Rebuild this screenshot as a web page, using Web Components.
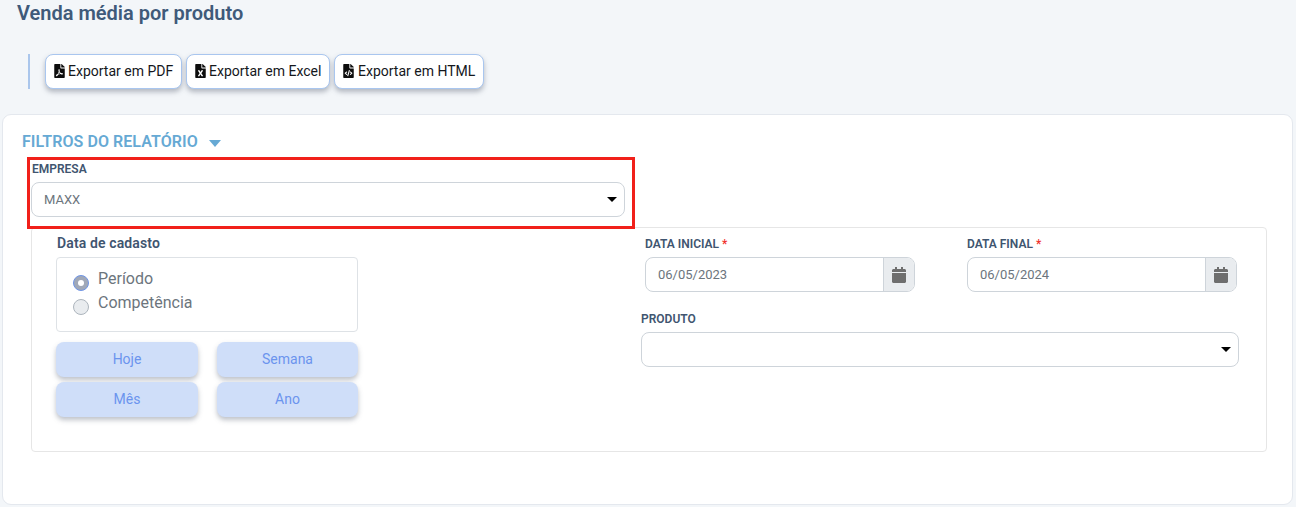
<!DOCTYPE html>
<html lang="pt-BR">
<head>
<meta charset="utf-8">
<title>Venda média por produto</title>
<style>
  html, body { margin: 0; height: 507px; overflow: hidden; }
  body { background: #f3f6f9; font-family: Roboto, "Liberation Sans", sans-serif; }
</style>
</head>
<body>
<report-page>
  <span slot="title">Venda média por produto</span>
  <export-button slot="exports" icon="pdf" style="width:137px">Exportar em PDF</export-button>
  <export-button slot="exports" icon="excel" style="width:144px">Exportar em Excel</export-button>
  <export-button slot="exports" icon="html" style="width:150px;gap:4px">Exportar em HTML</export-button>
  <filter-card slot="content">
    <span slot="title">FILTROS DO RELATÓRIO</span>
    <select-field slot="company" label="EMPRESA" value="MAXX" highlighted></select-field>
    <period-panel slot="period" label="Data de cadasto">
      <radio-option slot="options" checked>Período</radio-option>
      <radio-option slot="options">Competência</radio-option>
      <period-button slot="buttons">Hoje</period-button>
      <period-button slot="buttons">Semana</period-button>
      <period-button slot="buttons">Mês</period-button>
      <period-button slot="buttons">Ano</period-button>
    </period-panel>
    <date-field slot="dates" label="DATA INICIAL" value="06/05/2023"></date-field>
    <date-field slot="dates" label="DATA FINAL" value="06/05/2024"></date-field>
    <select-field slot="product" label="PRODUTO"></select-field>
  </filter-card>
</report-page>

<script>
  const ICONS = {
    pdf: "M181.9 256.1c-5-16-4.9-46.9-2-46.9 8.4 0 7.6 36.9 2 46.9zm-1.7 47.2c-7.7 20.2-17.3 43.3-28.4 62.7 18.3-7 39-17.2 62.9-21.9-12.7-9.6-24.9-23.4-34.5-40.8zM86.1 428.1c0 .8 13.2-5.4 34.9-40.2-6.7 6.3-29.1 24.5-34.9 40.2zM248 160h136v328c0 13.3-10.7 24-24 24H24c-13.3 0-24-10.7-24-24V24C0 10.7 10.7 0 24 0h200v136c0 13.2 10.8 24 24 24zm-8 171.8c-20-12.2-33.3-29-42.7-53.8 4.5-18.5 11.6-46.6 6.2-64.2-4.7-29.4-42.4-26.5-47.8-6.8-5 18.3-.4 44.1 8.1 77-11.6 27.6-28.7 64.6-40.8 85.8-.1 0-.1.1-.2.1-27.1 13.9-73.6 44.5-54.5 68 5.6 6.9 16 10 21.5 10 17.9 0 35.7-18 61.1-61.8 25.8-8.5 54.1-19.1 79-23.2 21.7 11.8 47.1 19.5 64 19.5 29.2 0 31.2-32 19.7-43.4-13.9-13.6-54.3-9.7-73.6-7.2zM377 105L279 7c-4.5-4.5-10.6-7-17-7h-6v128h128v-6.1c0-6.3-2.5-12.4-7-16.9zm-74.1 255.3c4.1-2.7-2.5-11.9-42.8-9 37.1 15.8 42.8 9 42.8 9z",
    excel: "M224 136V0H24C10.7 0 0 10.7 0 24v464c0 13.3 10.7 24 24 24h336c13.3 0 24-10.7 24-24V160H248c-13.2 0-24-10.8-24-24zm60.1 106.5L224 336l60.1 93.5c5.1 8-.6 18.5-10.1 18.5h-34.9c-4.4 0-8.5-2.4-10.6-6.3C208.9 405.5 192 373 192 373c-6.1 14.1-9.5 19-36.6 68.8-2.1 3.9-6.1 6.3-10.5 6.3H110c-9.5 0-15.2-10.5-10.1-18.5l60.3-93.5-60.3-93.5c-5.2-8 .6-18.5 10.1-18.5h34.8c4.4 0 8.5 2.4 10.6 6.3 26.1 48.8 20 33.6 36.6 68.5 0 0 6.1-11.7 36.6-68.5 2.1-3.9 6.2-6.3 10.6-6.3H274c9.5-.1 15.2 10.4 10.1 18.4zM384 121.9v6.1H256V0h6.1c6.4 0 12.5 2.5 17 7l97.9 98c4.5 4.5 7 10.6 7 16.9z",
    html: "M384 121.941V128H256V0h6.059c6.365 0 12.47 2.529 16.971 7.029l97.941 97.941A24.005 24.005 0 0 1 384 121.941zM248 160c-13.2 0-24-10.8-24-24V0H24C10.745 0 0 10.745 0 24v464c0 13.255 10.745 24 24 24h336c13.255 0 24-10.745 24-24V160H248zM123.206 400.505a5.4 5.4 0 0 1-7.633.246l-64.866-60.812a5.4 5.4 0 0 1 0-7.879l64.866-60.812a5.4 5.4 0 0 1 7.633.246l19.579 20.885a5.4 5.4 0 0 1-.372 7.747L101.65 336l40.763 35.874a5.4 5.4 0 0 1 .372 7.747l-19.579 20.884zm51.295 50.479l-27.453-7.97a5.402 5.402 0 0 1-3.681-6.692l61.44-211.626a5.402 5.402 0 0 1 6.692-3.681l27.452 7.97a5.4 5.4 0 0 1 3.68 6.692l-61.44 211.626a5.397 5.397 0 0 1-6.69 3.681zm160.792-111.045l-64.866 60.812a5.4 5.4 0 0 1-7.633-.246l-19.58-20.885a5.4 5.4 0 0 1 .372-7.747L284.35 336l-40.763-35.874a5.4 5.4 0 0 1-.372-7.747l19.58-20.885a5.4 5.4 0 0 1 7.633-.246l64.866 60.812a5.4 5.4 0 0 1-.001 7.879z"
  };
  const CALENDAR = "M12 192h424c6.6 0 12 5.4 12 12v260c0 26.5-21.5 48-48 48H48c-26.5 0-48-21.5-48-48V204c0-6.6 5.4-12 12-12zm436-44v-36c0-26.5-21.5-48-48-48h-48V12c0-6.6-5.4-12-12-12h-40c-6.6 0-12 5.4-12 12v52H160V12c0-6.6-5.4-12-12-12h-40c-6.6 0-12 5.4-12 12v52H48C21.5 64 0 85.5 0 112v36c0 6.6 5.4 12 12 12h424c6.6 0 12-5.4 12-12z";

  // small helper, every element below is the same shape: open shadow + static markup
  class ShadowElement extends HTMLElement {
    constructor() {
      super();
      this.attachShadow({ mode: "open" });
    }
    connectedCallback() {
      this.shadowRoot.innerHTML = this.markup();
    }
  }

  class ReportPage extends ShadowElement {
    markup() {
      return `
        <style>
          :host { display: block; padding: 0 3px 0 2px; }
          h1 { margin: 0; padding: 1px 0 0 15px; height: 54px; box-sizing: border-box;
               font: 600 20px/24px Roboto, sans-serif; color: #3f5a7a; }
          .toolbar { display: flex; gap: 4px; height: 35px; margin: 0 0 25px 26px; padding-left: 15px;
                     border-left: 2px solid #aac6ec; }
        </style>
        <h1><slot name="title"></slot></h1>
        <div class="toolbar"><slot name="exports"></slot></div>
        <slot name="content"></slot>`;
    }
  }

  class ExportButton extends ShadowElement {
    markup() {
      return `
        <style>
          :host { display: flex; align-items: center; gap: 3px; height: 35px; box-sizing: border-box;
                  padding: 0 0 1px 8px; background: #fff; border: 1px solid #a9c6ef; border-radius: 8px;
                  box-shadow: 0 3px 5px rgba(60, 70, 90, .35); color: #14171c;
                  font: 400 14px Roboto, sans-serif; }
          svg { width: 11px; height: 14px; fill: #0d0d0d; flex: none; }
        </style>
        <svg viewBox="0 0 384 512"><path d="${ICONS[this.getAttribute("icon")]}"/></svg>
        <slot></slot>`;
    }
  }

  class FilterCard extends ShadowElement {
    markup() {
      return `
        <style>
          :host { display: block; box-sizing: border-box; height: 391px; padding: 17px 25px 0 19px;
                  background: #fff; border: 1px solid #e4e8ee; border-radius: 9px; }
          .heading { display: flex; align-items: center; gap: 11px; height: 20px;
                     font: 600 16px/20px Roboto, sans-serif; letter-spacing: .06px; color: #66a9d4; }
          .heading i { border: 6px solid transparent; border-top: 7px solid #66a9d4; border-bottom: 0; width: 0; height: 0; margin-top: 2px; }
          .company { margin: 10px 0 0 9px; width: 594px; }
          .filters { display: flex; height: 225px; box-sizing: border-box; margin: 10px 0 0 9px;
                     border: 1px solid #e6e6e6; border-radius: 4px; }
          .left { width: 302px; margin-left: 24px; }
          .right { margin-left: 283px; width: 598px; }
          .dates { display: flex; gap: 52px; padding-left: 4px; }
          .product { margin-top: 20px; }
        </style>
        <div class="heading"><slot name="title"></slot><i></i></div>
        <div class="company"><slot name="company"></slot></div>
        <div class="filters">
          <div class="left"><slot name="period"></slot></div>
          <div class="right">
            <div class="dates"><slot name="dates"></slot></div>
            <div class="product"><slot name="product"></slot></div>
          </div>
        </div>`;
    }
  }

  class SelectField extends ShadowElement {
    markup() {
      const highlight = this.hasAttribute("highlighted") ? `<div class="highlight"></div>` : "";
      return `
        <style>
          :host { display: block; position: relative; }
          :host([highlighted]) label { padding-left: 1px; }
          label { display: block; height: 20px; font: 600 12px/15px Roboto, sans-serif; color: #3f5570; }
          .box { display: flex; align-items: center; justify-content: space-between; box-sizing: border-box;
                 height: 35px; padding: 0 7px 0 12px; border: 1px solid #ced4da; border-radius: 8px;
                 background: #fff; font: 400 13px Roboto, sans-serif; color: #6c757d; }
          .box i { border: 5px solid transparent; border-top: 5px solid #000; border-bottom: 0; width: 0; height: 0; }
          .highlight { position: absolute; left: -4px; right: -10px; top: -5px; height: 72px; box-sizing: border-box;
                       border: 3px solid #f1201a; pointer-events: none; }
        </style>
        <label>${this.getAttribute("label")}</label>
        <div class="box"><span>${this.getAttribute("value") || ""}</span><i></i></div>
        ${highlight}`;
    }
  }

  class DateField extends ShadowElement {
    markup() {
      return `
        <style>
          :host { display: block; width: 270px; padding-top: 9px; }
          label { display: block; height: 20px; font: 600 12px/15px Roboto, sans-serif; color: #3f5570; }
          label b { color: #f1322c; font-weight: 500; }
          .group { display: flex; height: 35px; box-sizing: border-box; border: 1px solid #ced4da; border-radius: 8px; overflow: hidden; }
          .value { flex: 1; padding-left: 12px; font: 400 13px/33px Roboto, sans-serif; color: #6c757d; }
          .addon { width: 30px; display: flex; align-items: center; justify-content: center;
                   background: #e9ecef; border-left: 1px solid #ced4da; }
          svg { width: 14px; height: 16px; fill: #6e6e6e; }
        </style>
        <label>${this.getAttribute("label")} <b>*</b></label>
        <div class="group">
          <div class="value">${this.getAttribute("value")}</div>
          <div class="addon"><svg viewBox="0 0 448 512"><path d="${CALENDAR}"/></svg></div>
        </div>`;
    }
  }

  class PeriodPanel extends ShadowElement {
    markup() {
      return `
        <style>
          :host { display: block; padding-top: 7px; }
          h2 { margin: 0 0 6px 1px; font: 600 14px/16px Roboto, sans-serif; letter-spacing: .13px; color: #3f5570; }
          .options { box-sizing: border-box; height: 75px; padding: 9px 16px; border: 1px solid #dee2e6; border-radius: 4px; }
          .buttons { display: grid; grid-template-columns: 142px 141px; column-gap: 19px; row-gap: 5px; margin-top: 10px; }
        </style>
        <h2>${this.getAttribute("label")}</h2>
        <div class="options"><slot name="options"></slot></div>
        <div class="buttons"><slot name="buttons"></slot></div>`;
    }
  }

  class RadioOption extends ShadowElement {
    markup() {
      const checked = this.hasAttribute("checked");
      return `
        <style>
          :host { display: flex; gap: 9px; height: 24px; font: 400 16px/24px Roboto, sans-serif; color: #6c757d; }
          i { flex: none; box-sizing: border-box; width: 16px; height: 16px; margin-top: 8px; border-radius: 50%;
              background: ${checked ? "#a0a8b8" : "#e9ecef"};
              border: 1px solid ${checked ? "#6f95e6" : "#adb5bd"}; display: flex; align-items: center; justify-content: center; }
          i::after { content: ""; width: 6px; height: 6px; border-radius: 50%; background: ${checked ? "#fff" : "transparent"}; }
        </style>
        <i></i><span><slot></slot></span>`;
    }
  }

  class PeriodButton extends ShadowElement {
    markup() {
      return `
        <style>
          :host { display: flex; align-items: center; justify-content: center; height: 35px; box-sizing: border-box;
                  padding-bottom: 1px; border-radius: 8px;
                  background: #cfdef9; color: #6b94ee; font: 400 14px Roboto, sans-serif;
                  box-shadow: 0 3px 5px rgba(70, 80, 100, .35); }
        </style>
        <slot></slot>`;
    }
  }

  customElements.define("report-page", ReportPage);
  customElements.define("export-button", ExportButton);
  customElements.define("filter-card", FilterCard);
  customElements.define("select-field", SelectField);
  customElements.define("date-field", DateField);
  customElements.define("period-panel", PeriodPanel);
  customElements.define("radio-option", RadioOption);
  customElements.define("period-button", PeriodButton);
</script>
</body>
</html>
